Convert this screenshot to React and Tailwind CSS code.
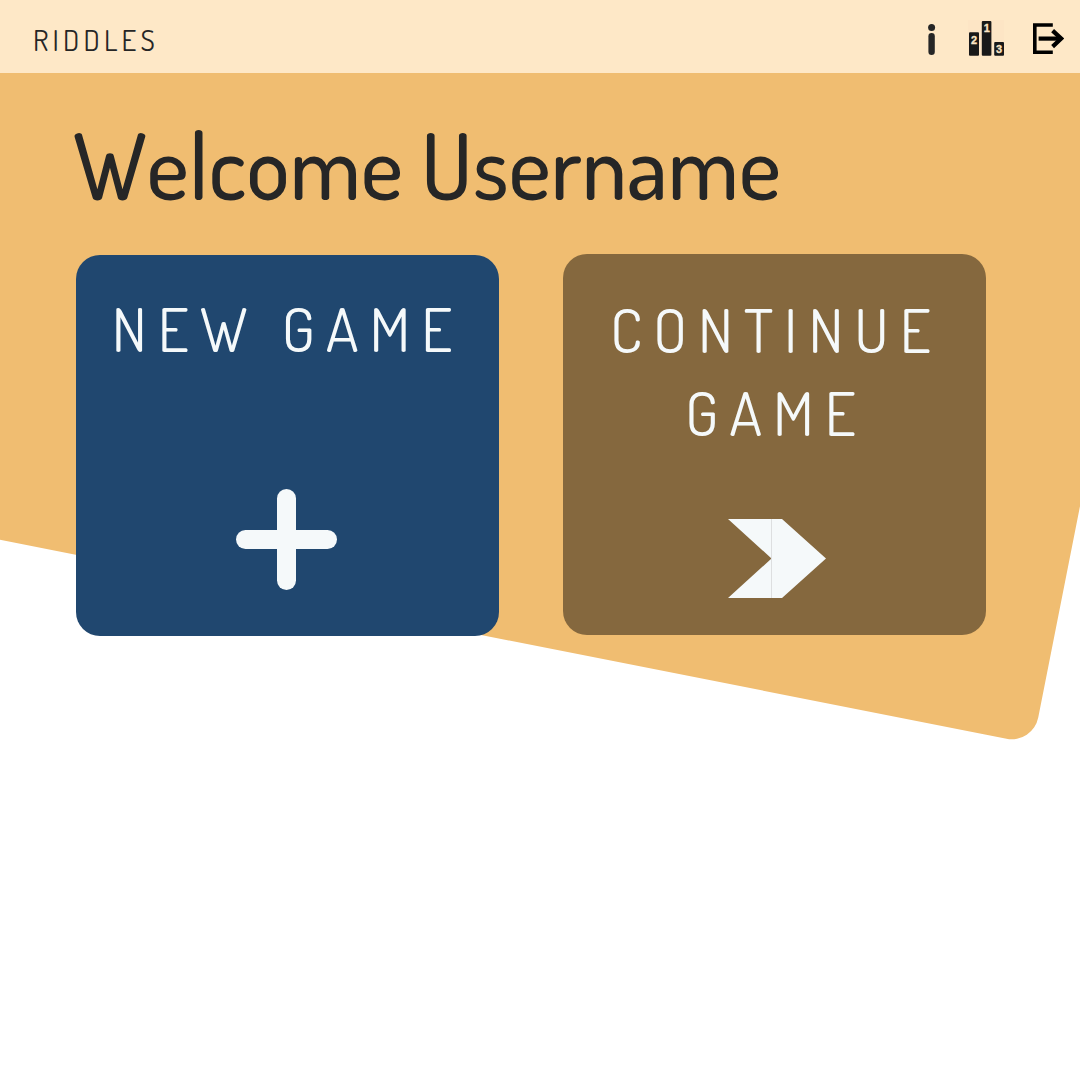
import React from "react";

function InfoIcon() {
  return (
    <svg className="h-9 w-2" viewBox="0 0 8 36" fill="#262626">
      <circle cx="3.6" cy="7.6" r="3.5" />
      <rect x="0.4" y="13" width="6.4" height="22" rx="3.2" />
    </svg>
  );
}

function LeaderboardIcon() {
  return (
    <svg className="h-9 w-9" viewBox="0 0 36 36">
      <rect width="36" height="36" fill="#fde5c5" />
      <g fill="#191919">
        <rect x="1" y="12.3" width="10" height="23.5" rx="1" />
        <rect x="13.8" y="1" width="9.6" height="34.8" rx="1" />
        <rect x="26.2" y="22" width="9.8" height="13.8" rx="1" />
      </g>
      <g className="font-['Liberation_Sans'] text-[11px] font-bold" fill="#fde5c5" stroke="#fde5c5" strokeWidth="0.3" textAnchor="middle">
        <text x="6" y="23.5">2</text>
        <text x="18.9" y="11.8">1</text>
        <text x="31" y="33">3</text>
      </g>
    </svg>
  );
}

function ExitIcon() {
  return (
    <svg className="h-8 w-8" viewBox="0 0 32 32" fill="none" stroke="#000">
      <path d="M20.8 3H2.8v27.2H20.8" strokeWidth="3.6" />
      <path d="M6.6 16.6H27" strokeWidth="4.2" />
      <path d="M20.6 8.6l8.6 8-8.6 8" strokeWidth="4.2" />
    </svg>
  );
}

export default function App() {
  return (
    <div className="relative isolate h-[1080px] w-[1080px] overflow-hidden bg-white font-['Dosis','Roboto',sans-serif]">
      <div className="absolute bottom-[336.5px] right-[47px] -z-10 h-[1600px] w-[1800px] origin-bottom-right rotate-[11.18deg] rounded-[27px] bg-[#f0bd71]" />

      <header className="flex h-[72.5px] items-center justify-between bg-[#fee8c7] pl-[33px] pr-[16px]">
        <span className="mt-2 text-[29px] leading-9 tracking-[4.2px] text-[#262626]">RIDDLES</span>
        <nav className="flex items-center gap-[28px] pt-1">
          <div className="flex items-center gap-[32.5px]">
            <InfoIcon />
            <LeaderboardIcon />
          </div>
          <ExitIcon />
        </nav>
      </header>

      <main className="pl-[76px]">
        <h1 className="-ml-[3px] pt-[32px] text-[91px] leading-[120px] font-medium tracking-[-0.2px] whitespace-nowrap text-[#262626] [font-kerning:none]">
          Welcome Username
        </h1>
        <div className="mt-[29.5px] flex gap-16">
          <section className="mt-px flex h-[380.5px] w-[423px] flex-col items-center rounded-[24px] bg-[#20476f] pt-[31px] text-[#f5f9fa]">
            <h2 className="text-[61px] leading-[83px] tracking-[11px] whitespace-nowrap">NEW GAME</h2>
            <svg className="mt-[120px] mr-[2px] size-[101px]" viewBox="0 0 101 101" fill="currentColor">
              <rect x="41" width="19" height="101" rx="9.5" />
              <rect y="41" width="101" height="19" rx="9.5" />
            </svg>
          </section>
          <section className="flex h-[381px] w-[423px] flex-col items-center rounded-[24px] bg-[#85683e] pt-[33px] text-[#f5f9fa]">
            <h2 className="ml-[3px] text-center text-[61px] leading-[83px] tracking-[11px]">
              CONTINUE
              <br />
              GAME
            </h2>
            <svg className="mt-[66px] ml-[5px] h-[79px] w-[98px]" viewBox="0 0 98 79" fill="currentColor">
              <path d="M0 0H54L98 39.5L54 79H0L43.5 39.5Z" />
              <path d="M43.5 0V79" stroke="#dddfe0" strokeWidth="1" />
            </svg>
          </section>
        </div>
      </main>
    </div>
  );
}
